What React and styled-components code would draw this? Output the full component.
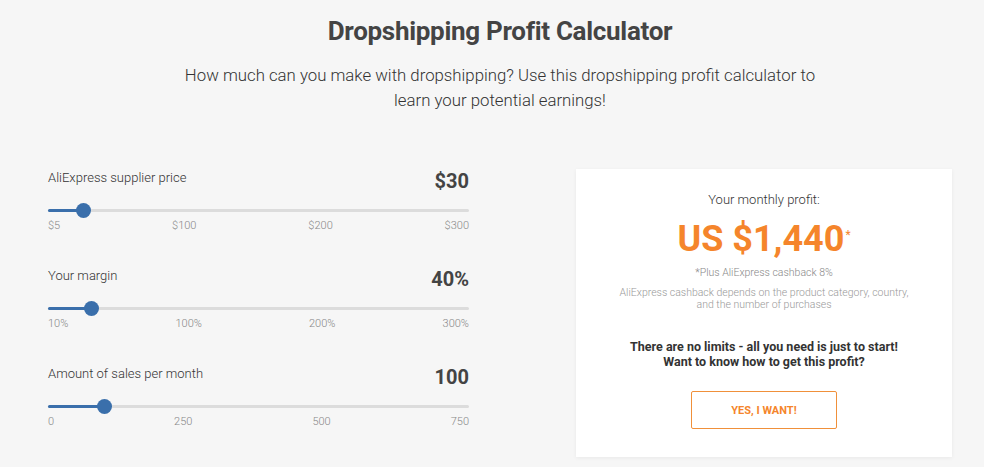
import React from 'react';
import styled, { createGlobalStyle } from 'styled-components';

const GlobalStyle = createGlobalStyle`
  body {
    margin: 0;
    background: #f6f6f6;
    font-family: Roboto, 'Liberation Sans', sans-serif;
    color: #444;
  }
`;

const Page = styled.div`
  width: 904px;
  margin: 0 0 0 48px;
  padding-bottom: 11px;
`;

const Header = styled.header`
  text-align: center;
  padding-top: 16px;
`;

const Title = styled.h1`
  margin: 0;
  font-size: 26px;
  line-height: 30px;
  font-weight: 700;
  color: #444;
  letter-spacing: -0.3px;
`;

const Lead = styled.p`
  margin: 17px auto 0;
  width: 650px;
  font-size: 16.8px;
  line-height: 25px;
  font-weight: 300;
  color: #333;
`;

const Main = styled.div`
  display: flex;
  justify-content: space-between;
  align-items: flex-start;
  margin-top: 56px;
`;

const Sliders = styled.div`
  width: 421px;
  display: flex;
  flex-direction: column;
  gap: 34px;
`;

const SliderRow = styled.div`
  display: flex;
  flex-direction: column;
`;

const RowHead = styled.div`
  display: flex;
  justify-content: space-between;
  align-items: flex-start;
`;

const Label = styled.span`
  font-size: 13px;
  line-height: 18px;
  font-weight: 300;
  color: #333;
`;

const Value = styled.span`
  font-size: 20px;
  line-height: 24px;
  font-weight: 700;
  color: #444;
`;

const Track = styled.div`
  position: relative;
  height: 3px;
  margin-top: 16px;
  background: #dcdcdc;
  border-radius: 2px;
`;

const Fill = styled.div`
  height: 100%;
  background: #3a6fab;
  border-radius: 2px;
`;

const Thumb = styled.div`
  position: absolute;
  top: 50%;
  width: 15px;
  height: 15px;
  margin: -7.5px 0 0 -7.5px;
  border-radius: 50%;
  background: #3a6fab;
`;

const Ticks = styled.div`
  display: flex;
  justify-content: space-between;
  margin-top: 7px;
  font-size: 11px;
  line-height: 14px;
  font-weight: 300;
  color: #888;
`;

const Card = styled.div`
  width: 376px;
  box-sizing: border-box;
  background: #fff;
  box-shadow: 0 1px 4px rgba(0, 0, 0, 0.06);
  padding: 22px 20px 28px;
  text-align: center;
`;

const CardLabel = styled.div`
  font-size: 13px;
  line-height: 18px;
  font-weight: 300;
  color: #333;
`;

const Profit = styled.div`
  margin-top: 10px;
  font-size: 36px;
  line-height: 40px;
  font-weight: 700;
  color: #f5852b;

  sup {
    font-size: 12px;
    font-weight: 400;
    vertical-align: top;
    position: relative;
    top: -4px;
    margin-left: 1px;
  }
`;

const Cashback = styled.div`
  margin-top: 7px;
  font-size: 10.5px;
  line-height: 14px;
  font-weight: 300;
  color: #888;
`;

const Note = styled.div`
  margin: 7px auto 0;
  width: 300px;
  font-size: 10.5px;
  line-height: 12px;
  font-weight: 300;
  color: #999;
`;

const Pitch = styled.div`
  margin-top: 28px;
  font-size: 12.5px;
  line-height: 15px;
  font-weight: 700;
  color: #333;
`;

const CtaButton = styled.button`
  margin-top: 22px;
  width: 146px;
  height: 38px;
  background: #fff;
  border: 1px solid #f0903a;
  border-radius: 2px;
  color: #f5852b;
  font-family: Roboto, 'Liberation Sans', sans-serif;
  font-size: 11px;
  font-weight: 700;
  cursor: pointer;
`;

const sliders = [
  { label: 'AliExpress supplier price', value: '$30', min: 5, max: 300, current: 30, ticks: ['$5', '$100', '$200', '$300'] },
  { label: 'Your margin', value: '40%', min: 10, max: 300, current: 40, ticks: ['10%', '100%', '200%', '300%'] },
  { label: 'Amount of sales per month', value: '100', min: 0, max: 750, current: 100, ticks: ['0', '250', '500', '750'] },
];

const Slider = ({ item }) => {
  const pct = ((item.current - item.min) / (item.max - item.min)) * 100;
  return (
    <SliderRow>
      <RowHead>
        <Label>{item.label}</Label>
        <Value>{item.value}</Value>
      </RowHead>
      <Track>
        <Fill style={{ width: `${pct}%` }} />
        <Thumb style={{ left: `${pct}%` }} />
      </Track>
      <Ticks>
        {item.ticks.map(t => <span key={t}>{t}</span>)}
      </Ticks>
    </SliderRow>
  );
};

export default function App() {
  return (
    <>
      <GlobalStyle />
      <Page>
        <Header>
          <Title>Dropshipping Profit Calculator</Title>
          <Lead>
            How much can you make with dropshipping? Use this dropshipping profit calculator to learn your potential earnings!
          </Lead>
        </Header>
        <Main>
          <Sliders>
            {sliders.map(s => <Slider key={s.label} item={s} />)}
          </Sliders>
          <Card>
            <CardLabel>Your monthly profit:</CardLabel>
            <Profit>US $1,440<sup>*</sup></Profit>
            <Cashback>*Plus AliExpress cashback 8%</Cashback>
            <Note>AliExpress cashback depends on the product category, country, and the number of purchases</Note>
            <Pitch>
              There are no limits - all you need is just to start!<br />
              Want to know how to get this profit?
            </Pitch>
            <CtaButton>YES, I WANT!</CtaButton>
          </Card>
        </Main>
      </Page>
    </>
  );
}
